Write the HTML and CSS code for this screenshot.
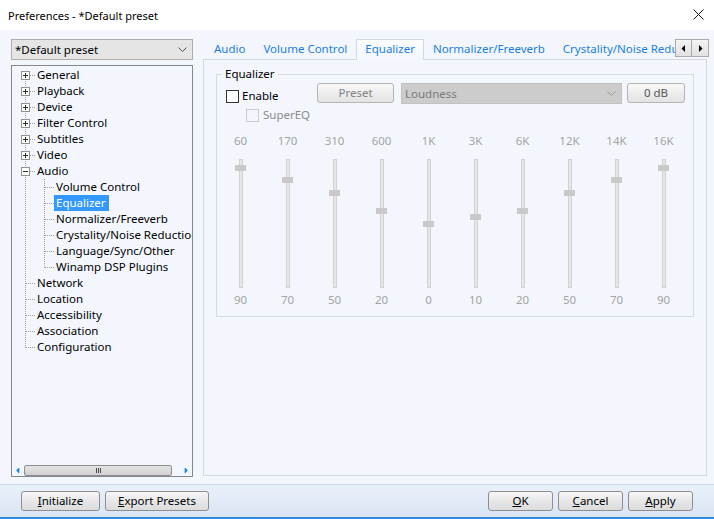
FILE: index.html
```html
<!DOCTYPE html>
<html>
<head>
<meta charset="utf-8">
<link rel="stylesheet" href="styles.css">
</head>
<body>
<div class="window">
  <div class="titlebar">
    <span class="title">Preferences - *Default preset</span>
    <svg class="close" width="11" height="11" viewBox="0 0 11 11"><path d="M0.5 0.5 L10.5 10.5 M10.5 0.5 L0.5 10.5" stroke="#111" stroke-width="1" fill="none"/></svg>
  </div>

  <div class="main">
    <div class="left">
      <div class="combo preset-combo">
        <span class="combo-text">*Default preset</span>
        <svg class="chev" width="9" height="5" viewBox="0 0 9 5"><path d="M0.5 0.5 L4.5 4.5 L8.5 0.5" stroke="#555" fill="none"/></svg>
      </div>
      <div class="tree">
        <div class="tree-list">
          <div class="row"><span class="c t first"><span class="box plus"></span></span><span class="lbl">General</span></div>
          <div class="row"><span class="c t"><span class="box plus"></span></span><span class="lbl">Playback</span></div>
          <div class="row"><span class="c t"><span class="box plus"></span></span><span class="lbl">Device</span></div>
          <div class="row"><span class="c t"><span class="box plus"></span></span><span class="lbl">Filter Control</span></div>
          <div class="row"><span class="c t"><span class="box plus"></span></span><span class="lbl">Subtitles</span></div>
          <div class="row"><span class="c t"><span class="box plus"></span></span><span class="lbl">Video</span></div>
          <div class="row"><span class="c t"><span class="box minus"></span></span><span class="lbl">Audio</span></div>
          <div class="row"><span class="c v"></span><span class="c t"></span><span class="lbl">Volume Control</span></div>
          <div class="row"><span class="c v"></span><span class="c t"></span><span class="lbl sel">Equalizer</span></div>
          <div class="row"><span class="c v"></span><span class="c t"></span><span class="lbl">Normalizer/Freeverb</span></div>
          <div class="row"><span class="c v"></span><span class="c t"></span><span class="lbl">Crystality/Noise Reduction</span></div>
          <div class="row"><span class="c v"></span><span class="c t"></span><span class="lbl">Language/Sync/Other</span></div>
          <div class="row"><span class="c v"></span><span class="c l"></span><span class="lbl">Winamp DSP Plugins</span></div>
          <div class="row"><span class="c t"></span><span class="lbl">Network</span></div>
          <div class="row"><span class="c t"></span><span class="lbl">Location</span></div>
          <div class="row"><span class="c t"></span><span class="lbl">Accessibility</span></div>
          <div class="row"><span class="c t"></span><span class="lbl">Association</span></div>
          <div class="row"><span class="c l"></span><span class="lbl">Configuration</span></div>
        </div>
        <div class="hscroll">
          <span class="sb-arrow"><svg width="12" height="11" viewBox="0 0 12 11"><path d="M7 3 L4.5 5.5 L7 8 Z" fill="#1c8ae6" stroke="#1c8ae6" stroke-width="0.8"/></svg></span>
          <span class="sb-thumb"><span class="grip"></span></span>
          <span class="sb-track"></span>
          <span class="sb-arrow"><svg width="12" height="11" viewBox="0 0 12 11"><path d="M5 3 L7.5 5.5 L5 8 Z" fill="#1c8ae6" stroke="#1c8ae6" stroke-width="0.8"/></svg></span>
        </div>
      </div>
    </div>

    <div class="right">
      <div class="tabstrip">
        <div class="tabs">
          <div class="tab">Audio</div>
          <div class="tab">Volume Control</div>
          <div class="tab active">Equalizer</div>
          <div class="tab">Normalizer/Freeverb</div>
          <div class="tab">Crystality/Noise Reduction</div>
        </div>
        <div class="tab-arrows">
          <span class="tab-arr"><svg width="5" height="7" viewBox="0 0 5 7"><path d="M4 0 L4 7 L0.5 3.5 Z" fill="#000"/></svg></span>
          <span class="tab-arr"><svg width="5" height="7" viewBox="0 0 5 7"><path d="M1 0 L1 7 L4.5 3.5 Z" fill="#000"/></svg></span>
        </div>
      </div>
      <div class="page">
        <div class="group">
          <div class="group-title">Equalizer</div>
          <div class="eq-top">
            <div class="enable"><span class="chk"></span><span class="chk-lbl">Enable</span></div>
            <div class="btn small preset-btn disabled">Preset</div>
            <div class="combo loud-combo">
              <span class="combo-text">Loudness</span>
              <svg class="chev" width="9" height="5" viewBox="0 0 9 5"><path d="M0.5 0.5 L4.5 4.5 L8.5 0.5" stroke="#9a9a9a" fill="none"/></svg>
            </div>
            <div class="btn small db-btn">0 dB</div>
          </div>
          <div class="supereq"><span class="chk off"></span><span class="chk-lbl off">SuperEQ</span></div>
          <div class="bands">
            <div class="band"><span class="band-lbl">60</span><div class="track"><span class="thumb" style="margin-top:5px"></span></div><span class="band-lbl">90</span></div>
            <div class="band"><span class="band-lbl">170</span><div class="track"><span class="thumb" style="margin-top:17px"></span></div><span class="band-lbl">70</span></div>
            <div class="band"><span class="band-lbl">310</span><div class="track"><span class="thumb" style="margin-top:30px"></span></div><span class="band-lbl">50</span></div>
            <div class="band"><span class="band-lbl">600</span><div class="track"><span class="thumb" style="margin-top:48px"></span></div><span class="band-lbl">20</span></div>
            <div class="band"><span class="band-lbl">1K</span><div class="track"><span class="thumb" style="margin-top:61px"></span></div><span class="band-lbl">0</span></div>
            <div class="band"><span class="band-lbl">3K</span><div class="track"><span class="thumb" style="margin-top:54px"></span></div><span class="band-lbl">10</span></div>
            <div class="band"><span class="band-lbl">6K</span><div class="track"><span class="thumb" style="margin-top:48px"></span></div><span class="band-lbl">20</span></div>
            <div class="band"><span class="band-lbl">12K</span><div class="track"><span class="thumb" style="margin-top:30px"></span></div><span class="band-lbl">50</span></div>
            <div class="band"><span class="band-lbl">14K</span><div class="track"><span class="thumb" style="margin-top:17px"></span></div><span class="band-lbl">70</span></div>
            <div class="band"><span class="band-lbl">16K</span><div class="track"><span class="thumb" style="margin-top:5px"></span></div><span class="band-lbl">90</span></div>
          </div>
        </div>
      </div>
    </div>
  </div>

  <div class="bottom">
    <div class="btn-group">
      <div class="btn w-init"><u>I</u>nitialize</div>
      <div class="btn w-export"><u>E</u>xport Presets</div>
    </div>
    <div class="btn-group">
      <div class="btn w-std"><u>O</u>K</div>
      <div class="btn w-std"><u>C</u>ancel</div>
      <div class="btn w-std"><u>A</u>pply</div>
    </div>
  </div>
</div>
</body>
</html>
```

FILE: styles.css
```css
* { box-sizing: border-box; }

html, body {
  margin: 0;
  padding: 0;
}

body {
  width: 714px;
  height: 519px;
  overflow: hidden;
  background: #f3f7fd;
  font-family: "Noto Sans", "Open Sans", sans-serif;
  font-size: 11.5px;
  color: #000;
}

.window {
  width: 714px;
  height: 519px;
  display: flex;
  flex-direction: column;
}

/* Title bar */
.titlebar {
  height: 30px;
  flex: none;
  background: #fff;
  display: flex;
  align-items: center;
  padding: 0 10px 0 8px;
}
.title {
  font-size: 11px;
  color: #000;
  flex: 1;
}
.close {
  display: block;
  margin-top: -2px;
}

/* Main */
.main {
  height: 454px;
  flex: none;
  display: flex;
  padding: 9px 6px 0 11px;
  gap: 10px;
}

.left {
  width: 182px;
  flex: none;
  display: flex;
  flex-direction: column;
  gap: 5px;
  padding-bottom: 7px;
}

.combo {
  display: flex;
  align-items: center;
  border: 1px solid #adadad;
  white-space: nowrap;
  overflow: hidden;
}
.combo-text { flex: 1; padding-left: 3px; line-height: 16px; }
.preset-combo {
  height: 21px;
  background: #e5e5e5;
}
.preset-combo .chev { margin-right: 5px; }

.tree {
  flex: 1;
  border: 1px solid #828790;
  display: flex;
  flex-direction: column;
  overflow: hidden;
}
.tree-list {
  flex: 1;
  padding: 1px 0 0 4px;
  overflow: hidden;
}
.row {
  display: flex;
  height: 16px;
  white-space: nowrap;
}
.c {
  flex: none;
  width: 19px;
  height: 16px;
  background-repeat: no-repeat;
}
.v {
  background-image: repeating-linear-gradient(to bottom, #a0a0a0 0 1px, transparent 1px 2px);
  background-size: 1px 16px;
  background-position: 9px 0;
}
.t {
  background-image:
    repeating-linear-gradient(to bottom, #a0a0a0 0 1px, transparent 1px 2px),
    repeating-linear-gradient(to right, #a0a0a0 0 1px, transparent 1px 2px);
  background-size: 1px 16px, 9px 1px;
  background-position: 9px 0, 10px 8px;
}
.t.first {
  background-size: 1px 8px, 9px 1px;
  background-position: 9px 8px, 10px 8px;
}
.l {
  background-image:
    repeating-linear-gradient(to bottom, #a0a0a0 0 1px, transparent 1px 2px),
    repeating-linear-gradient(to right, #a0a0a0 0 1px, transparent 1px 2px);
  background-size: 1px 9px, 9px 1px;
  background-position: 9px 0, 10px 8px;
}
.box {
  display: block;
  width: 9px;
  height: 9px;
  margin: 4px 0 0 5px;
  border: 1px solid #919191;
  background-color: #fff;
  background-repeat: no-repeat;
}
.box.plus {
  background-image: linear-gradient(#2b2b2b, #2b2b2b), linear-gradient(#2b2b2b, #2b2b2b);
  background-size: 5px 1px, 1px 5px;
  background-position: 1px 3px, 3px 1px;
}
.box.minus {
  background-image: linear-gradient(#2b2b2b, #2b2b2b);
  background-size: 5px 1px;
  background-position: 1px 3px;
}
.lbl {
  line-height: 16px;
  height: 16px;
  padding: 0 3px 0 2px;
}
.lbl.sel {
  background: #3399ff;
  color: #fff;
}

.hscroll {
  height: 11px;
  flex: none;
  display: flex;
}
.sb-arrow {
  width: 12px;
  flex: none;
  display: flex;
}
.sb-thumb {
  width: 148px;
  flex: none;
  border: 1px solid #8e8e8e;
  border-radius: 2px;
  background: linear-gradient(#e4e4e4, #d0d0d0);
  display: flex;
  align-items: center;
  justify-content: center;
}
.grip {
  width: 5px;
  height: 5px;
  background: repeating-linear-gradient(to right, #4a4a4a 0 1px, transparent 1px 2px);
}
.sb-track { flex: 1; }

/* Right */
.right {
  width: 505px;
  flex: none;
  display: flex;
  flex-direction: column;
  padding-bottom: 8px;
}
.tabstrip {
  height: 20px;
  flex: none;
  display: flex;
  position: relative;
  z-index: 1;
}
.tabs {
  flex: 1;
  display: flex;
  align-items: flex-end;
  padding-left: 2px;
  overflow: hidden;
  height: 21px;
}
.tab {
  flex: none;
  white-space: nowrap;
  color: #1a7ee0;
  padding: 0 9px 2px;
  line-height: 16px;
  height: 18px;
  margin-bottom: 1px;
}
.tab.active {
  height: 21px;
  margin-bottom: 0;
  border: 1px solid #d3d9e0;
  border-bottom: none;
  background: linear-gradient(#fafcff, #f3f7fd);
  line-height: 18px;
  padding: 0 8px 1px;
}
.tab-arrows {
  flex: none;
  display: flex;
  height: 18px;
  margin-right: -1px;
}
.tab-arr {
  width: 17px;
  height: 18px;
  border: 1px solid #a9a9a9;
  background: linear-gradient(#f4f4f4, #e2e2e2);
  display: flex;
  align-items: center;
  justify-content: center;
}
.tab-arr + .tab-arr { border-left: none; }

.page {
  flex: 1;
  margin-right: 1px;
  border: 1px solid #d3d9e0;
  padding-top: 14px;
}

.group {
  margin: 0 12px;
  border: 1px solid #d6dbe1;
  padding-bottom: 8px;
}
.group-title {
  width: fit-content;
  margin: -9px 0 0 5px;
  padding: 0 3px;
  background: #f3f7fd;
  line-height: 16px;
}
.eq-top {
  display: flex;
  align-items: flex-start;
  height: 21px;
  margin-top: 1px;
  padding-left: 9px;
}
.enable {
  width: 91px;
  flex: none;
  display: flex;
  align-items: center;
  height: 16px;
  margin-top: 5px;
}
.chk {
  width: 13px;
  height: 13px;
  flex: none;
  border: 1px solid #333;
  background: #fff;
}
.chk.off {
  border-color: #cdcdcd;
  background: #f3f7fd;
}
.chk-lbl { margin-left: 3px; line-height: 16px; }
.chk-lbl.off { color: #8a8a8a; margin-left: 4px; }

.btn {
  height: 20px;
  border: 1px solid #8f8f8f;
  border-radius: 3px;
  background: linear-gradient(#f7f7f7, #e6e6e6 55%, #dcdcdc);
  text-align: center;
  line-height: 18px;
  white-space: nowrap;
}
.btn.small {
  border-color: #b4b4b4;
  background: linear-gradient(#f9f9f9, #ececec 55%, #e3e3e3);
}
.btn.disabled { color: #828282; }
.preset-btn { width: 77px; flex: none; }
.loud-combo {
  width: 221px;
  flex: none;
  height: 21px;
  margin-left: 7px;
  background: #cccccc;
  border-color: #c2c2c2;
  color: #7b7b7b;
}
.loud-combo .chev { margin-right: 5px; }
.db-btn {
  width: 58px;
  flex: none;
  margin-left: 5px;
  color: #555;
}

.supereq {
  display: flex;
  align-items: center;
  height: 16px;
  margin: 3px 0 0 29px;
}

.bands {
  display: flex;
  margin-top: 10px;
}
.band {
  width: 47px;
  flex: none;
  display: flex;
  flex-direction: column;
  align-items: center;
}
.band-lbl {
  line-height: 16px;
  color: #a3a3a3;
}
.track {
  width: 4px;
  height: 129px;
  margin: 10px 0 4px;
  border: 1px solid #d2d2d2;
  background: #e6e6e6;
  display: flex;
  flex-direction: column;
  align-items: center;
}
.thumb {
  width: 11px;
  height: 6px;
  flex: none;
  background: #c9c9c9;
}

/* Bottom bar */
.bottom {
  height: 35px;
  flex: none;
  border-top: 1px solid #c9d8ec;
  border-bottom: 2px solid #3a88d8;
  background: linear-gradient(#e9f0fa, #dae5f4);
  display: flex;
  justify-content: space-between;
  padding: 6px 21px 0 21px;
}
.btn-group {
  display: flex;
  gap: 5px;
}
.w-init { width: 79px; }
.w-export { width: 104px; }
.w-std { width: 65px; }
```
